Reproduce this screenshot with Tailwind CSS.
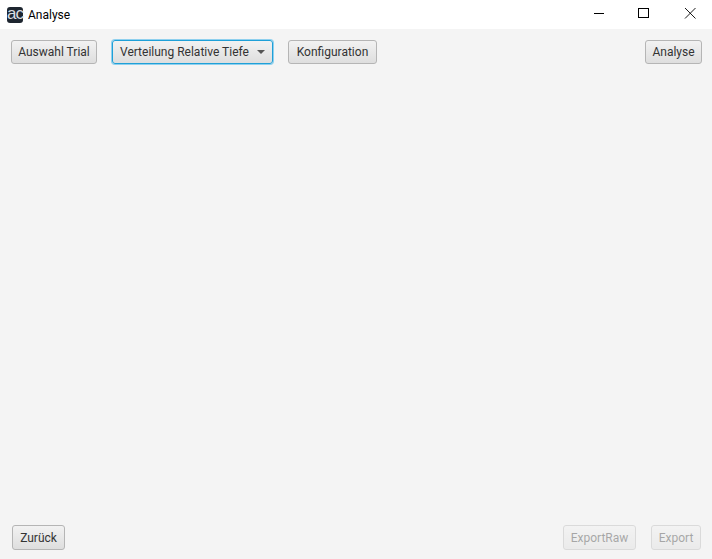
<!DOCTYPE html>
<html><head><meta charset="utf-8"><script src="https://cdn.jsdelivr.net/npm/@tailwindcss/browser@4"></script></head>
<body class="m-0">
<div class="w-[712px] h-[559px] flex flex-col bg-[#f4f4f4] overflow-hidden font-['Roboto',sans-serif] text-[12px] text-[#333] whitespace-nowrap">
  <header class="h-[29px] bg-white flex items-center pl-[7px] text-black shrink-0">
    <div class="w-[16px] h-[16px] rounded-[3px] bg-[#1e2630] text-[#d8dde2] flex items-center justify-center text-[17px] leading-none tracking-[-1px] font-['Liberation_Sans',sans-serif] font-light pb-[2px]">ac</div>
    <span class="ml-[5px]">Analyse</span>
    <div class="ml-auto flex items-center text-black">
      <svg class="w-[46px] h-[29px]" viewBox="0 0 46 29"><path d="M20 13.5h10" stroke="#000" stroke-width="1"/></svg>
      <svg class="w-[46px] h-[29px]" viewBox="0 0 46 29"><rect x="18.5" y="8.5" width="10" height="9" fill="none" stroke="#000"/></svg>
      <svg class="w-[46px] h-[29px]" viewBox="0 0 46 29"><path d="M19 8l10.5 10.5M29.5 8L19 18.5" stroke="#000" stroke-width="0.9" fill="none"/></svg>
    </div>
  </header>
  <div class="flex items-center h-[24px] mt-[11px] pl-[11px] pr-[10px] gap-[15px]">
    <button class="h-[24px] w-[86px] rounded-[3px] border border-[#b5b5b5] bg-gradient-to-b from-[#f2f2f2] to-[#dedede] flex items-center justify-center">Auswahl Trial</button>
    <button class="h-[24px] w-[161px] rounded-[3px] border border-[#1fa0d8] ring-1 ring-[#8fd0ee] bg-gradient-to-b from-[#f2f2f2] to-[#dedede] flex items-center pl-[7px]">Verteilung Relative Tiefe<span class="ml-auto mr-[7px] w-0 h-0 border-x-[4px] border-x-transparent border-t-[4px] border-t-[#555]"></span></button>
    <button class="h-[24px] w-[89px] rounded-[3px] border border-[#b5b5b5] bg-gradient-to-b from-[#f2f2f2] to-[#dedede] flex items-center justify-center">Konfiguration</button>
    <button class="ml-auto h-[24px] w-[57px] rounded-[3px] border border-[#b5b5b5] bg-gradient-to-b from-[#f2f2f2] to-[#dedede] flex items-center justify-center">Analyse</button>
  </div>
  <div class="mt-auto mb-[9px] flex items-center h-[25px] pl-[12px] pr-[11px]">
    <button class="h-[25px] w-[53px] rounded-[3px] border border-[#b5b5b5] bg-gradient-to-b from-[#f2f2f2] to-[#dedede] flex items-center justify-center">Zurück</button>
    <button class="ml-auto h-[25px] w-[73px] rounded-[3px] border border-[#b5b5b5] bg-gradient-to-b from-[#f2f2f2] to-[#dedede] flex items-center justify-center opacity-40">ExportRaw</button>
    <button class="ml-[15px] h-[25px] w-[50px] rounded-[3px] border border-[#b5b5b5] bg-gradient-to-b from-[#f2f2f2] to-[#dedede] flex items-center justify-center opacity-40">Export</button>
  </div>
</div>
</body></html>
